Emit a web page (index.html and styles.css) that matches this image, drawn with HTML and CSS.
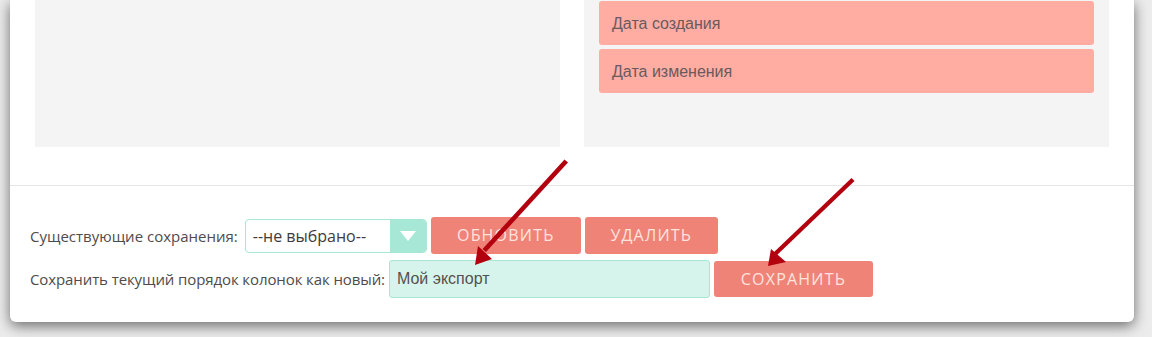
FILE: index.html
```html
<!DOCTYPE html>
<html lang="ru">
    <head>
        <meta charset="UTF-8">
        <link rel="stylesheet" href="styles.css">
        <title>Порядок колонок</title>
    </head>
    <body>
        <!--======================= диалог =======================-->
        <div class="dialog">
            <div class="columns">
                <div class="panel"></div>
                <div class="panel panelRight">
                    <div class="colItem">Дата создания</div>
                    <div class="colItem">Дата изменения</div>
                </div>
            </div>

            <div class="footer">
                <div class="row">
                    <span class="label">Существующие сохранения:</span>
                    <div class="select">
                        <span class="selectValue">--не выбрано--</span>
                        <span class="selectArrow"><span class="triangle"></span></span>
                    </div>
                    <div class="btn btnUpdate">ОБНОВИТЬ</div>
                    <div class="btn btnDelete">УДАЛИТЬ</div>
                </div>
                <div class="row">
                    <span class="label labelLong">Сохранить текущий порядок колонок как новый:</span>
                    <div class="nameInput">Мой экспорт</div>
                    <div class="btn btnSave">СОХРАНИТЬ</div>
                </div>
            </div>
        </div>

        <!--======================= стрелки поверх =======================-->
        <svg class="arrows" width="1152" height="337" viewBox="0 0 1152 337">
            <g fill="#b3000f">
                <polygon points="564.5,159.5 568,162.5 486,252 482.5,249"/>
                <polygon points="475,265 478,246 492,259"/>
                <polygon points="851.5,178 854.5,181 775,257 772,254"/>
                <polygon points="768,266 771,249 786,262"/>
            </g>
        </svg>
    </body>
</html>
```

FILE: styles.css
```css
body{
    margin: 0;
    background-color: #ececec;
    font-family: "Liberation Sans", Arial, sans-serif;
    color: #4f4b4b;
    height: 337px;
    overflow: hidden;
    position: relative;
}

/*************************************************************************************************/

/* диалог */
.dialog{
    margin-left: 10px;
    width: 1124px;
    height: 322px;
    background: #fff;
    border-radius: 0 0 6px 6px;
    box-shadow: 0 4px 14px rgba(0, 0, 0, 0.55);
}

.columns{
    display: grid;
    grid-template-columns: 525px 525px;
    gap: 24px;
    padding: 0 25px;
}

.panel{
    height: 147px;
    background: #f4f4f4;
}

.panelRight{
    padding: 1px 15px 0 15px;
    box-sizing: border-box;
}

.colItem{
    height: 44px;
    margin-bottom: 4px;
    border-radius: 3px;
    background: #ffaca3;
    color: #6a5a5c;
    font-family: "Liberation Sans", Arial, sans-serif;
    font-size: 16px;
    line-height: 46px;
    padding-left: 13px;
}

/*************************************************************************************************/

/* нижняя часть */
.footer{
    margin-top: 38px;
    border-top: 1px solid #e6e6e6;
    padding: 31px 20px 0 20px;
    font-family: "Open Sans", sans-serif;
    font-size: 15px;
}

.row{
    display: flex;
    align-items: center;
    gap: 4px;
    margin-bottom: 6px;
}

.label{
    color: #4f4b4b;
}

.labelLong{
    letter-spacing: -0.1px;
}

.select{
    display: flex;
    width: 182px;
    height: 34px;
    box-sizing: border-box;
    border: 1px solid #a8e6d4;
    border-radius: 4px;
    overflow: hidden;
    margin-left: 3px;
}

.selectValue{
    flex: 1;
    line-height: 32px;
    padding-left: 7px;
    color: #3f3b3b;
    font-size: 16px;
}

.selectArrow{
    width: 36px;
    background: #a6e8d5;
    display: flex;
    align-items: center;
    justify-content: center;
}

.triangle{
    width: 0;
    height: 0;
    border-left: 8px solid transparent;
    border-right: 8px solid transparent;
    border-top: 10px solid #fff;
}

.btn{
    height: 37px;
    line-height: 37px;
    text-align: center;
    background: #ef8378;
    color: #fde4df;
    border-radius: 3px;
    font-family: "Open Sans", sans-serif;
    font-size: 16px;
    letter-spacing: 1.2px;
}

.btnUpdate{
    width: 150px;
}

.btnDelete{
    width: 133px;
}

.nameInput{
    width: 321px;
    height: 38px;
    box-sizing: border-box;
    border: 1px solid #a8e6d4;
    border-radius: 3px;
    background: #d7f4ec;
    line-height: 36px;
    padding-left: 7px;
    color: #555050;
    font-family: "Liberation Sans", Arial, sans-serif;
    font-size: 16px;
}

.btnSave{
    width: 159px;
    height: 36px;
    line-height: 36px;
}

/*************************************************************************************************/

/* стрелки */
.arrows{
    position: absolute;
    left: 0;
    top: 0;
    pointer-events: none;
}
```
